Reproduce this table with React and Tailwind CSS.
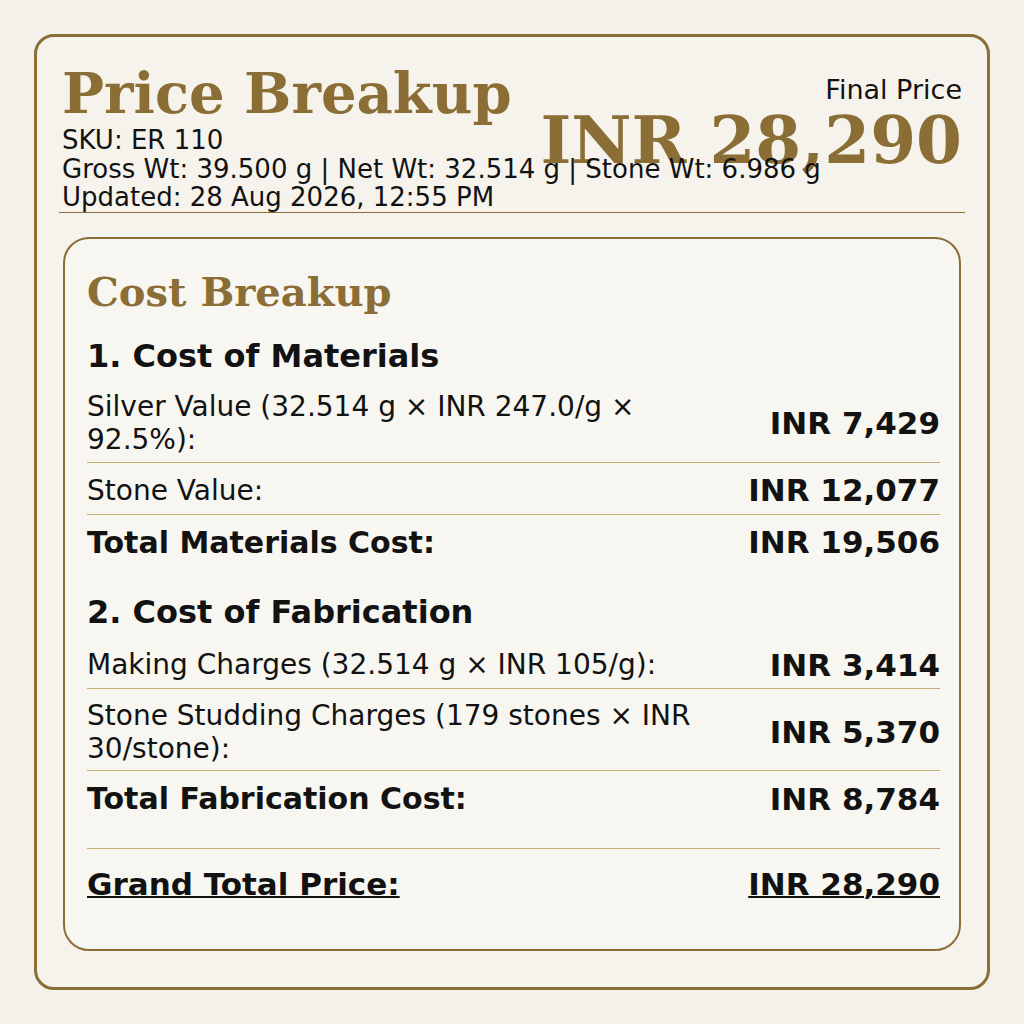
import React from "react";

const GOLD = "text-[#8b6e35]";

function Row({ label, value, last = false, bold = false }) {
  return (
    <div
      className={
        "flex items-center justify-between gap-8 pt-[9.5px] pb-[5.5px] " +
        (last ? "border-b border-transparent" : "border-b border-[#c6ad78]")
      }
    >
      <div
        className={
          "flex-1 min-w-0 leading-[normal] " +
          (bold ? "text-[30px] font-bold" : "text-[28px]")
        }
      >
        {label}
      </div>
      <div className="shrink-0 whitespace-nowrap text-right text-[31px] font-bold leading-[normal]">
        {value}
      </div>
    </div>
  );
}

export default function App() {
  return (
    <div className="min-h-screen w-full bg-[#f4f1ea] pt-[34px] pl-[34px] font-['DejaVu_Sans',sans-serif] text-[#121212]">
      <div className="flex h-[956px] w-[956px] flex-col rounded-[20px] border-[3px] border-[#8b6e35] bg-[#f6f3ec] p-[22px]">
        {/* Header */}
        <div className="flex items-start justify-between border-b border-[#8b6e35]">
          <div className="relative min-w-0 flex-1 pl-[3px] pt-[1px]">
            <h1
              className={
                "whitespace-nowrap font-['DejaVu_Serif',serif] text-[56px] font-bold leading-[normal] " +
                GOLD
              }
            >
              Price Breakup
            </h1>
            <div className="text-[26px] leading-[1.1]">
              <div className="whitespace-nowrap">SKU: ER 110</div>
              <div className="whitespace-nowrap">
                Gross Wt: 39.500 g | Net Wt: 32.514 g | Stone Wt: 6.986 g
              </div>
              <div className="whitespace-nowrap">Updated: 28 Aug 2026, 12:55 PM</div>
            </div>
          </div>
          <div className="shrink-0 pr-[3px] pt-[15px] text-right">
            <div className="mb-[2px] text-[27px] leading-[normal]">Final Price</div>
            <div
              className={
                "whitespace-nowrap font-['DejaVu_Serif',serif] text-[66px] font-bold leading-none " +
                GOLD
              }
            >
              INR 28,290
            </div>
          </div>
        </div>

        {/* Cost breakup card */}
        <div className="mx-[4px] mt-[24px] rounded-[26px] border-2 border-[#8b6e35] bg-[#f8f6f0] pt-[29px] pl-[22px] pr-[19px] pb-[33px]">
          <h2
            className={
              "mb-[22px] font-['DejaVu_Serif',serif] text-[40px] font-bold leading-[normal] " + GOLD
            }
          >
            Cost Breakup
          </h2>

          <section>
            <h3 className="mb-[6px] text-[32px] font-bold leading-[normal]">1. Cost of Materials</h3>
            <Row label="Silver Value (32.514 g × INR 247.0/g × 92.5%):" value="INR 7,429" />
            <Row label="Stone Value:" value="INR 12,077" />
            <Row label="Total Materials Cost:" value="INR 19,506" bold last />
          </section>

          <section className="mt-[26.5px]">
            <h3 className="mb-[6px] text-[32px] font-bold leading-[normal]">2. Cost of Fabrication</h3>
            <Row label="Making Charges (32.514 g × INR 105/g):" value="INR 3,414" />
            <Row label="Stone Studding Charges (179 stones × INR 30/stone):" value="INR 5,370" />
            <Row label="Total Fabrication Cost:" value="INR 8,784" bold last />
          </section>

          <div className="mt-[25px] flex items-center justify-between border-t border-[#c6ad78] pt-[16.5px] pb-[14.5px] text-[31px] font-bold leading-[normal]">
            <span className="underline decoration-2 underline-offset-[1px]">Grand Total Price:</span>
            <span className="underline decoration-2 underline-offset-[1px]">INR 28,290</span>
          </div>
        </div>
      </div>
    </div>
  );
}
